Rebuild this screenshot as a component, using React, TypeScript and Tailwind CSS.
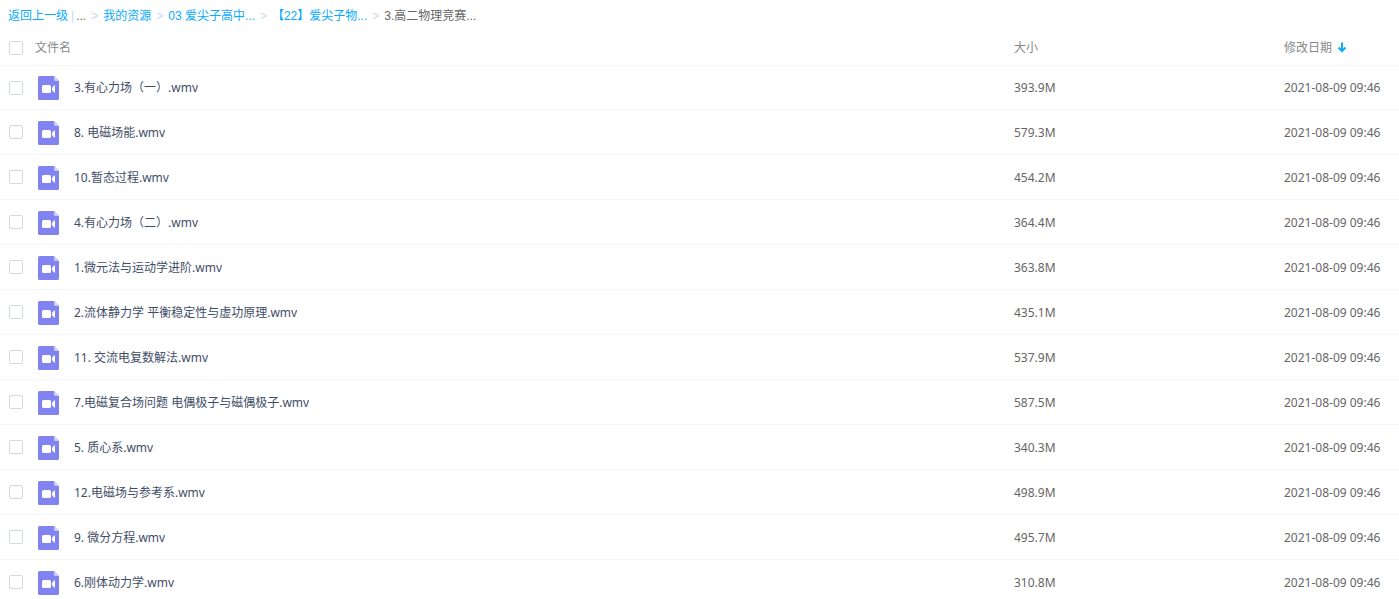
import { useState } from "react";

interface FileItem {
  name: string;
  size: string;
  modified: string;
}

const crumbs = ["我的资源", "03 爱尖子高中...", "【22】爱尖子物..."];

const files: FileItem[] = [
  { name: "3.有心力场（一）.wmv", size: "393.9M", modified: "2021-08-09 09:46" },
  { name: "8. 电磁场能.wmv", size: "579.3M", modified: "2021-08-09 09:46" },
  { name: "10.暂态过程.wmv", size: "454.2M", modified: "2021-08-09 09:46" },
  { name: "4.有心力场（二）.wmv", size: "364.4M", modified: "2021-08-09 09:46" },
  { name: "1.微元法与运动学进阶.wmv", size: "363.8M", modified: "2021-08-09 09:46" },
  { name: "2.流体静力学 平衡稳定性与虚功原理.wmv", size: "435.1M", modified: "2021-08-09 09:46" },
  { name: "11. 交流电复数解法.wmv", size: "537.9M", modified: "2021-08-09 09:46" },
  { name: "7.电磁复合场问题 电偶极子与磁偶极子.wmv", size: "587.5M", modified: "2021-08-09 09:46" },
  { name: "5. 质心系.wmv", size: "340.3M", modified: "2021-08-09 09:46" },
  { name: "12.电磁场与参考系.wmv", size: "498.9M", modified: "2021-08-09 09:46" },
  { name: "9. 微分方程.wmv", size: "495.7M", modified: "2021-08-09 09:46" },
  { name: "6.刚体动力学.wmv", size: "310.8M", modified: "2021-08-09 09:46" }
];

function VideoFileIcon() {
  return (
    <svg className="block h-6 w-[21px] shrink-0" viewBox="0 0 21 24" aria-hidden="true">
      <path d="M1.500 0H16L21 5V22.500A1.500 1.500 0 0 1 19.500 24H1.500A1.500 1.500 0 0 1 0 22.500V1.500A1.500 1.500 0 0 1 1.500 0Z" fill="#8183f1" />
      <path d="M16 0L21 5H17.500A1.500 1.500 0 0 1 16 3.500Z" fill="#cdcdfa" />
      <rect x="4" y="9" width="9" height="8" rx="1.500" fill="#fff" />
      <path d="M14 12L16 9.500H17V16.500H16L14 14Z" fill="#fff" />
    </svg>
  );
}

interface CheckboxProps {
  label: string;
  checked: boolean;
  onChange: () => void;
}

function Checkbox({ label, checked, onChange }: CheckboxProps) {
  return (
    <input
      className="block size-3.5 appearance-none rounded-xs border border-[#d3d9e4] bg-white checked:border-[#09aaff] checked:bg-[#09aaff]"
      type="checkbox"
      aria-label={label}
      checked={checked}
      onChange={onChange}
    />
  );
}

export default function App() {
  const [selected, setSelected] = useState<string[]>([]);
  const allSelected = selected.length === files.length;

  function toggleFile(name: string) {
    setSelected((current) =>
      current.includes(name) ? current.filter((item) => item !== name) : [...current, name]
    );
  }

  return (
    <main className="bg-white font-['Noto_Sans','Noto_Sans_CJK_SC',sans-serif] text-xs text-[#424e67]">
      <nav
        className="flex h-8 items-center px-2 font-['Liberation_Sans','Noto_Sans_CJK_SC',sans-serif] whitespace-pre text-[#09aaff]"
        aria-label="路径"
      >
        <a href="#up">返回上一级</a>
        <span className="ml-[3px] mr-0.5 text-[#c4d8f4]">|</span>
        <span className="text-[#666]">...</span>
        {crumbs.map((crumb) => (
          <span key={crumb} className="flex">
            <span className="mx-[5px] text-[#c4d8f4]">&gt;</span>
            <a href="#folder">{crumb}</a>
          </span>
        ))}
        <span className="mx-[5px] text-[#c4d8f4]">&gt;</span>
        <span className="text-[#666]">3.高二物理竞赛...</span>
      </nav>

      <table className="w-full table-fixed border-separate border-spacing-0 text-left">
        <colgroup>
          <col className="w-[35px]" />
          <col />
          <col className="w-[270px]" />
          <col className="w-[115px]" />
        </colgroup>
        <thead className="text-[#888] [&_th]:pb-0.5 [&_th]:font-normal">
          <tr className="h-[33px]">
            <th className="pl-[9px]">
              <Checkbox
                label="全选"
                checked={allSelected}
                onChange={() => setSelected(allSelected ? [] : files.map((file) => file.name))}
              />
            </th>
            <th>文件名</th>
            <th>大小</th>
            <th>
              <button className="flex items-center gap-1" type="button">
                修改日期
                <svg className="size-3" viewBox="0 0 12 12" fill="none" stroke="#09aaff" strokeWidth="2" aria-hidden="true">
                  <path d="M6 0.500V9M2.500 5.500L6 9L9.500 5.500" />
                </svg>
              </button>
            </th>
          </tr>
        </thead>
        <tbody className="[&_td]:h-[45px] [&_td]:border-b [&_td]:border-[#f2f6fd] [&>tr:first-child>td]:border-t">
          {files.map((file) => (
            <tr key={file.name}>
              <td className="pl-[9px]">
                <Checkbox
                  label={file.name}
                  checked={selected.includes(file.name)}
                  onChange={() => toggleFile(file.name)}
                />
              </td>
              <td className="pt-px">
                <div className="flex items-center gap-[15px] pl-[3px]">
                  <VideoFileIcon />
                  <a className="truncate" href="#file">
                    {file.name}
                  </a>
                </div>
              </td>
              <td className="pt-px text-[#666]">{file.size}</td>
              <td className="pt-px whitespace-nowrap text-[#666]">{file.modified}</td>
            </tr>
          ))}
        </tbody>
      </table>
    </main>
  );
}
